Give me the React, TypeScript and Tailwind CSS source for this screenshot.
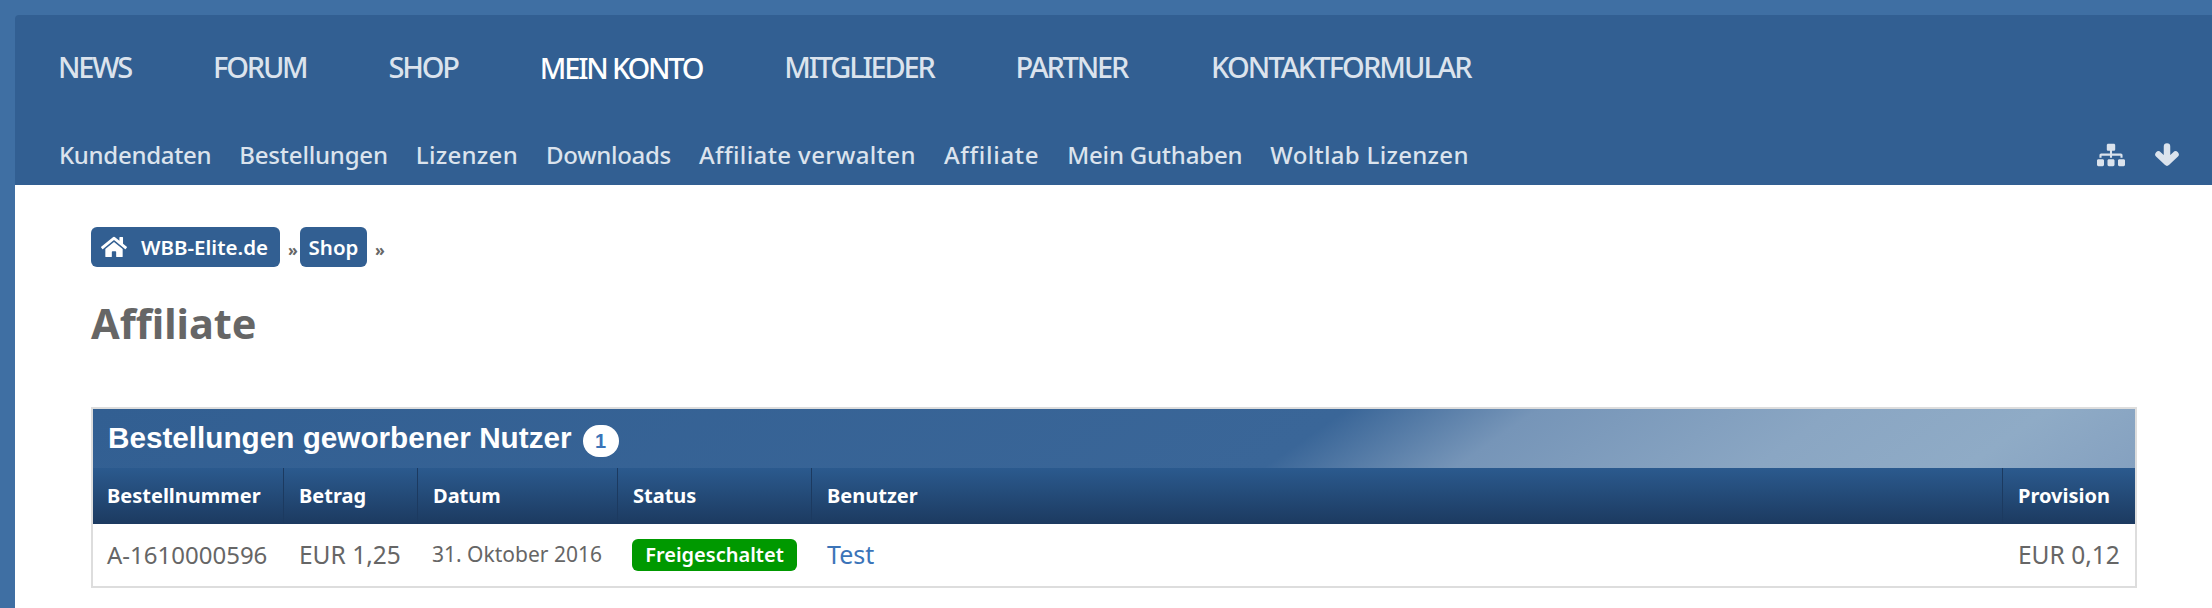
import { FaHome, FaSitemap } from "react-icons/fa";

const mainNav = [
  { label: "NEWS", className: "" },
  { label: "FORUM", className: "" },
  { label: "SHOP", className: "" },
  { label: "MEIN KONTO", className: "text-white pt-[2px]" },
  { label: "MITGLIEDER", className: "" },
  { label: "PARTNER", className: "" },
  { label: "KONTAKTFORMULAR", className: "ml-[2px] tracking-[-1.9px]" },
];
const subNav = [
  { label: "Kundendaten", spacing: "tracking-[-0.3px]" },
  { label: "Bestellungen", spacing: "tracking-[-0.2px]" },
  { label: "Lizenzen", spacing: "tracking-[0.3px]" },
  { label: "Downloads", spacing: "tracking-[-0.3px]" },
  { label: "Affiliate verwalten", spacing: "tracking-[0.4px]" },
  { label: "Affiliate", spacing: "tracking-[0.7px]" },
  { label: "Mein Guthaben", spacing: "tracking-[-0.2px]" },
  { label: "Woltlab Lizenzen", spacing: "tracking-[0.3px]" },
];
const columns = ["Bestellnummer", "Betrag", "Datum", "Status", "Benutzer", "Provision"];

export default function App() {
  return (
    <div className="h-[608px] overflow-hidden bg-[#3f6fa3] pt-[15px] pl-[15px] font-['Noto_Sans',sans-serif]">
      {/* Header */}
      <header className="h-[170px] rounded-tl-sm bg-[#325f92]">
        <nav className="flex h-[95px] items-center gap-[82px] pl-[43px] pt-[8px] text-[29px] font-medium leading-none tracking-[-2.2px] text-[#dbe3ed]">
          {mainNav.map((item) => (
            <a key={item.label} className={item.className}>
              {item.label}
            </a>
          ))}
        </nav>
        <div className="flex h-[75px] items-center justify-between pl-[44px] pr-[33px] pt-[14px]">
          <nav className="flex gap-[28px] text-[24px] font-medium leading-none text-[#dbe3ed]">
            {subNav.map((item) => (
              <a key={item.label} className={item.spacing}>
                {item.label}
              </a>
            ))}
          </nav>
          <div className="flex items-center gap-[30px] text-[#dbe3ed]">
            <FaSitemap className="h-[28px] w-[28px]" />
            <svg viewBox="0 0 24 23" className="h-[23px] w-[24px]" fill="none" stroke="currentColor" strokeWidth="6.5" strokeLinecap="round" strokeLinejoin="round">
              <path d="M12 3.5V18M3.5 11.5L12 19.5L20.5 11.5" />
            </svg>
          </div>
        </div>
      </header>

      {/* Content */}
      <main className="h-[423px] bg-white pl-[76px] pr-[75px] pt-[42px]">
        <div className="flex items-end text-[#666]">
          <a className="flex h-[40px] w-[189px] items-center gap-[14px] rounded-md bg-[#325f92] pl-[10px] text-[20.5px] font-semibold text-white">
            <FaHome className="h-[26px] w-[26px]" />
            WBB-Elite.de
          </a>
          <span className="w-[20px] pl-[8px] pb-[3px] text-[16px] font-bold leading-[28px]">»</span>
          <a className="flex h-[40px] w-[67px] items-center justify-center rounded-md bg-[#325f92] text-[20.5px] font-semibold text-white">
            Shop
          </a>
          <span className="pl-[8px] pb-[3px] text-[16px] font-bold leading-[28px]">»</span>
        </div>
        <h1 className="mt-[25px] text-[41.5px] font-bold leading-[62px] text-[#666]">Affiliate</h1>

        <section className="mt-[53px] border-2 border-[#ddd]">
          <div className="flex h-[59px] items-center gap-[11px] bg-[linear-gradient(145deg,#325f92_0%,#3a6698_59%,#7695b8_68%,#8aa6c3_82%,#8fabc6_92%,#85a1c0_100%)] pl-[15px] font-['Liberation_Sans',sans-serif] text-[29.7px] font-bold text-white">
            Bestellungen geworbener Nutzer
            <span className="mt-[4px] flex h-[32px] w-[36px] items-center justify-center rounded-full bg-white text-[20px] text-[#3b74b8]">
              1
            </span>
          </div>
          <div className="grid grid-cols-[190px_134px_200px_194px_1fr_133px]">
            {columns.map((col, i) => (
              <div
                key={col}
                className={`flex h-[56px] items-center bg-[linear-gradient(#2b5a8e,#1c3a60)] text-[20px] font-bold text-white ${i === 0 ? "pl-[14px]" : "border-l border-[#1c3a60] pl-[15px]"}`}
              >
                {col}
              </div>
            ))}
            <div className="flex h-[62px] items-center pl-[14px] text-[24px] text-[#666]">A-1610000596</div>
            <div className="flex h-[62px] items-center pl-[16px] text-[24.5px] text-[#666]">EUR 1,25</div>
            <div className="flex h-[62px] items-center pl-[15px] text-[21px] text-[#666]">31. Oktober 2016</div>
            <div className="flex h-[62px] items-center pl-[15px]">
              <span className="flex h-[32px] w-[165px] items-center justify-center rounded-md bg-[#090] text-[20px] font-semibold text-white">
                Freigeschaltet
              </span>
            </div>
            <div className="flex h-[62px] items-center pl-[16px] text-[25px] text-[#3b74b8]">Test</div>
            <div className="flex h-[62px] items-center pl-[16px] text-[24.5px] text-[#666]">EUR 0,12</div>
          </div>
        </section>
      </main>
    </div>
  );
}
